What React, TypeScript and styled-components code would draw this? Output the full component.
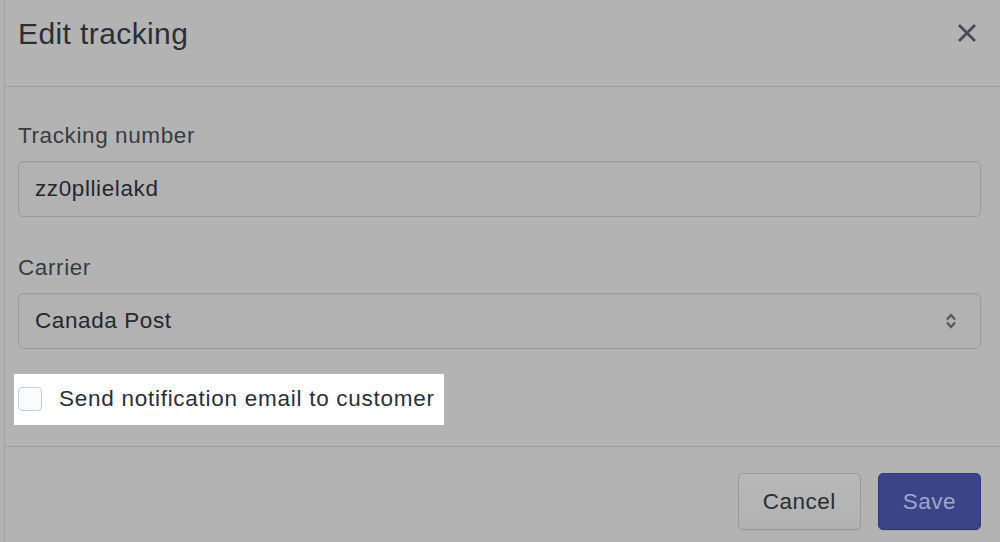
import React from 'react';
import styled, { createGlobalStyle } from 'styled-components';

const GlobalStyle = createGlobalStyle`
  html, body {
    margin: 0;
    padding: 0;
    background: #b3b3b3;
    font-family: "Liberation Sans", Arial, sans-serif;
    overflow: hidden;
  }
`;

const Frame = styled.div`
  margin-left: 4px;
  border-left: 1px solid #a2a2a2;
  height: 542px;
  background: #b3b3b3;
  display: flex;
  flex-direction: column;
`;

const Header = styled.div`
  height: 87px;
  box-sizing: border-box;
  border-bottom: 1px solid #9f9f9f;
  display: flex;
  align-items: flex-start;
  justify-content: space-between;
  padding: 16px 22px 0 13px;
`;

const Title = styled.h2`
  margin: 0;
  font-size: 30px;
  line-height: 36px;
  font-weight: 400;
  letter-spacing: 0.4px;
  color: #2a2f36;
`;

const CloseButton = styled.button`
  border: 0;
  background: none;
  padding: 0;
  margin-top: 6px;
  width: 22px;
  height: 22px;
  display: flex;
  align-items: center;
  justify-content: center;
  cursor: pointer;
`;

const Body = styled.div`
  padding: 35px 19px 21px 13px;
  border-bottom: 1px solid #9f9f9f;
  display: flex;
  flex-direction: column;
`;

const Field = styled.div<{ $gap?: number }>`
  display: flex;
  flex-direction: column;
  gap: 11px;
  margin-bottom: ${(p) => p.$gap ?? 0}px;
`;

const Label = styled.label`
  font-size: 22.5px;
  line-height: 28px;
  letter-spacing: 0.6px;
  color: #383c42;
`;

const Box = styled.div`
  height: 56px;
  box-sizing: border-box;
  border: 1px solid #999b9d;
  border-radius: 5px;
  background: #b2b2b2;
  box-shadow: inset 0 1px 0 rgba(0, 0, 0, 0.04);
  display: flex;
  align-items: center;
  justify-content: space-between;
  padding: 0 23px 0 16px;
  font-size: 22.5px;
  letter-spacing: 0.6px;
  color: #24282e;
`;

const Spotlight = styled.label`
  align-self: flex-start;
  margin-left: -4px;
  background: #ffffff;
  display: flex;
  align-items: center;
  gap: 17px;
  padding: 12px 9px 13px 4px;
`;

const Checkbox = styled.span`
  width: 24px;
  height: 24px;
  box-sizing: border-box;
  border: 1px solid #c4cdd5;
  border-radius: 4px;
  background: #fafbfc;
`;

const CheckText = styled.span`
  font-size: 22.5px;
  line-height: 26px;
  letter-spacing: 0.73px;
  color: #2c3036;
`;

const Footer = styled.div`
  display: flex;
  justify-content: flex-end;
  gap: 17px;
  padding: 26px 19px 0 0;
`;

const Button = styled.button<{ $primary?: boolean }>`
  height: 57px;
  box-sizing: border-box;
  border-radius: 5px;
  font-family: inherit;
  font-size: 22.5px;
  letter-spacing: 0.5px;
  padding: 0 ${(p) => (p.$primary ? 24 : 24)}px;
  border: 1px solid ${(p) => (p.$primary ? '#30397a' : '#9a9a9a')};
  background: ${(p) => (p.$primary ? '#3a4487' : 'linear-gradient(#b8b8b8, #b2b2b2)')};
  color: ${(p) => (p.$primary ? '#a0a5ca' : '#2a2e34')};
  box-shadow: 0 1px 0 rgba(0, 0, 0, 0.05);
  cursor: pointer;
`;

export default function App() {
  return (
    <>
      <GlobalStyle />
      <Frame>
        <Header>
          <Title>Edit tracking</Title>
          <CloseButton aria-label="Close">
            <svg width="20" height="20" viewBox="0 0 20 20">
              <path d="M2 2L18 18M18 2L2 18" stroke="#454c55" strokeWidth="2.8" strokeLinecap="butt" />
            </svg>
          </CloseButton>
        </Header>
        <Body>
          <Field $gap={37}>
            <Label>Tracking number</Label>
            <Box>zz0pllielakd</Box>
          </Field>
          <Field $gap={25}>
            <Label>Carrier</Label>
            <Box>
              Canada Post
              <svg width="12" height="16" viewBox="0 0 12 16">
                <path d="M2 6.5L6 2L10 6.5" fill="none" stroke="#565b62" strokeWidth="2.4" />
                <path d="M2 9.5L6 14L10 9.5" fill="none" stroke="#565b62" strokeWidth="2.4" />
              </svg>
            </Box>
          </Field>
          <Spotlight>
            <Checkbox />
            <CheckText>Send notification email to customer</CheckText>
          </Spotlight>
        </Body>
        <Footer>
          <Button>Cancel</Button>
          <Button $primary>Save</Button>
        </Footer>
      </Frame>
    </>
  );
}
